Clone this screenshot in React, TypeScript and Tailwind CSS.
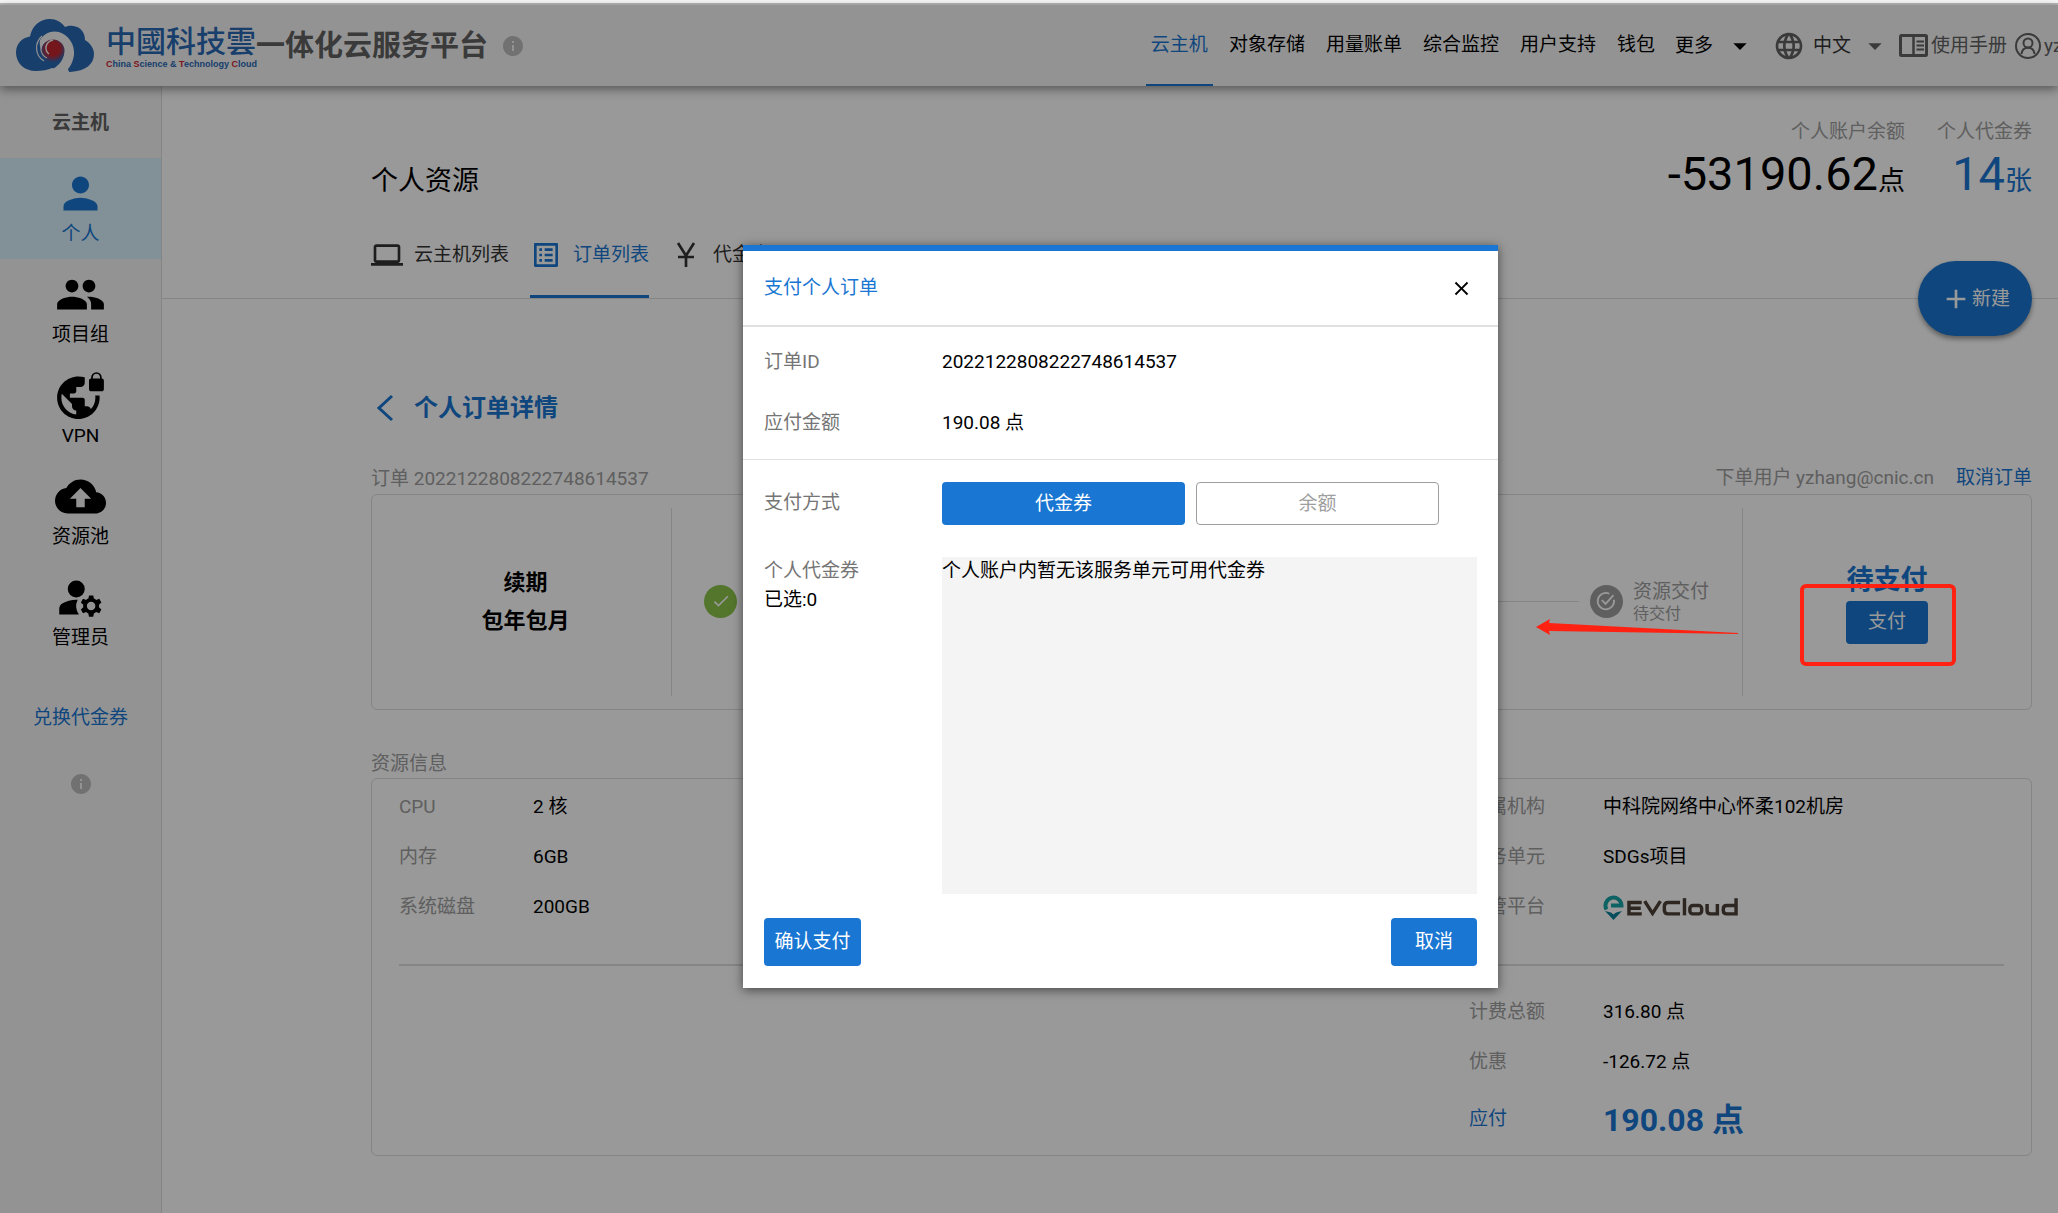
import React from "react";
import type { IconType } from "react-icons";
import {
  MdAdd,
  MdArrowDropDown,
  MdBackup,
  MdCheck,
  MdClose,
  MdComputer,
  MdGroup,
  MdInfo,
  MdLanguage,
  MdListAlt,
  MdManageAccounts,
  MdPerson,
  MdVpnLock,
} from "react-icons/md";

const navItems = ["云主机", "对象存储", "用量账单", "综合监控", "用户支持", "钱包"];

const sideItems: { label: string; icon: IconType; active?: boolean }[] = [
  { label: "个人", icon: MdPerson, active: true },
  { label: "项目组", icon: MdGroup },
  { label: "VPN", icon: MdVpnLock },
  { label: "资源池", icon: MdBackup },
  { label: "管理员", icon: MdManageAccounts },
];

function CloudLogo() {
  return (
    <svg viewBox="0 0 78 53" className="h-[53px] w-[78px]" aria-hidden="true">
      <defs>
        <radialGradient id="swirl" cx="0.5" cy="0.4" r="0.6">
          <stop offset="0.5" stopColor="#c4242f" />
          <stop offset="1" stopColor="#2868b4" />
        </radialGradient>
      </defs>
      <path
        d="M20 52C8 52 0 44 0 33.500C0 25 6 18.500 14 17.500C16 7 24 0 34 0C40 0 45.500 3 49 8C52 7 54 6.500 57 7C64 7.500 69 13 69 21C74 24 78 29 78 35C78 45 70 52 54 53L36 49C32 51 26 52 20 52Z"
        fill="#2868b4"
      />
      <path
        d="M24 21C28 14 36 11 43 13C53 16 59 26 58 36C57 43 54 48 52 50L53 53H30C42 49 50 40 47.500 30C45.500 24 40 20.500 34 21.500C29 22.500 26 26 26 31C24 28 23 25 24 21Z"
        fill="#f5f5f5"
      />
      <circle cx="37" cy="32" r="11.500" fill="url(#swirl)" />
      <path d="M26 17C18 24 19 37 28 42M30 19C22 26 24 36 31 39" fill="none" stroke="#f5f5f5" strokeWidth="1.200" />
      <path d="M37 21C29 23 28 31 33 35" fill="none" stroke="#f5f5f5" strokeWidth="1.500" />
    </svg>
  );
}

function ManualIcon() {
  return (
    <svg viewBox="0 0 29 23" className="h-[23px] w-[29px]" fill="none" stroke="currentColor" aria-hidden="true">
      <rect x="1.500" y="1.500" width="26" height="20" rx="1" strokeWidth="3" />
      <path d="M14.500 1V22" strokeWidth="2.500" />
      <path d="M17.500 7.500H25M17.500 11.500H25M17.500 15.500H25" strokeWidth="2" />
    </svg>
  );
}

function AccountIcon() {
  return (
    <svg viewBox="0 0 26 26" className="h-[26px] w-[26px]" fill="none" stroke="currentColor" strokeWidth="2" aria-hidden="true">
      <circle cx="13" cy="13" r="12" />
      <circle cx="13" cy="10" r="4.500" />
      <path d="M6.500 21C7 17 9.500 14.800 13 14.800S19 17 19.500 21" />
    </svg>
  );
}

function YenIcon() {
  return (
    <svg viewBox="0 0 24 24" className="size-8" fill="none" stroke="currentColor" strokeWidth="2" aria-hidden="true">
      <path d="M6 3L12 12.500L18 3M12 12V21M6 13.500H18" />
    </svg>
  );
}

function EvCloudLogo() {
  return (
    <span className="flex items-center">
      <svg viewBox="0 0 21 26" className="h-[26px] w-[21px]" fill="none" aria-hidden="true">
        <path d="M3.500 15.500A8 8 0 1 1 18.500 11.500H8" stroke="#17a3a6" strokeWidth="4" />
        <path d="M2 17L8 18.500L10.500 20.500L13 18.500L19 17L10.500 26Z" fill="#0b7f98" />
      </svg>
      <svg viewBox="0 0 114 18" className="ml-[3px] h-[18px] w-28" fill="none" stroke="#4c4038" strokeWidth="3.500" aria-hidden="true">
        <path d="M15 4.500H2V16H15M2 10.200H14" />
        <path d="M18 3L26 15.500L34 3" />
        <path d="M54 4.500H42Q38 4.500 38 8.500V12Q38 16 42 16H54" />
        <path d="M58.500 0V17.500" />
        <rect x="64" y="7.500" width="12" height="8.500" rx="3" />
        <path d="M81.500 6V12.500Q81.500 16 85 16H92V6" />
        <path d="M111 0V16H101.500Q98 16 98 12.500V11Q98 7.500 101.500 7.500H111" />
      </svg>
    </span>
  );
}

function Row({ label, children }: { label: string; children: React.ReactNode }) {
  return (
    <div className="flex h-[50px] items-center">
      <dt className="w-[134px] shrink-0 text-[#9e9e9e]">{label}</dt>
      <dd>{children}</dd>
    </div>
  );
}

function Header() {
  return (
    <header className="relative flex h-[81px] shrink-0 items-center bg-[#f5f5f5] pl-4 shadow-[0_3px_10px_rgba(0,0,0,0.45)]">
      <div className="flex shrink-0 items-center whitespace-nowrap">
        <CloudLogo />
        <div className="ml-3 w-[150px] pt-1 text-[#2868b4]">
          <div className="text-[30px] leading-8 font-medium">中國科技雲</div>
          <div className="font-['Liberation_Sans',sans-serif] text-[9px] leading-3 font-bold">
            <span className="text-[#d22630]">C</span>hina <span className="text-[#d22630]">S</span>cience &amp;{" "}
            <span className="text-[#d22630]">T</span>echnology <span className="text-[#d22630]">C</span>loud
          </div>
        </div>
        <h1 className="text-[29px] leading-10 font-bold text-[#616161]">一体化云服务平台</h1>
        <MdInfo className="ml-[13px] size-6 text-[#bdbdbd]" />
      </div>
      <nav className="ml-auto flex h-full shrink-0 items-center whitespace-nowrap">
        <div className="flex h-full gap-[11px]">
          {navItems.map((item, i) => (
            <a
              key={item}
              href="#"
              className={
                i === 0
                  ? "flex items-center border-b-2 border-[#1976d2] px-[5px] text-[#1976d2]"
                  : "flex items-center border-b-2 border-transparent px-[5px]"
              }
            >
              {item}
            </a>
          ))}
        </div>
        <button type="button" className="ml-[15px] flex items-center">
          更多
          <MdArrowDropDown className="ml-[11px] size-8" />
        </button>
        <button type="button" className="ml-[17px] flex items-center text-[#616161]">
          <MdLanguage className="size-8" />
          <span className="ml-2 text-[#333]">中文</span>
          <MdArrowDropDown className="ml-2 size-8" />
        </button>
        <a href="#" className="ml-2 flex items-center gap-[3px] text-[#616161]">
          <ManualIcon />
          使用手册
        </a>
        <a href="#" className="ml-2 flex w-[43px] items-center gap-[3px] overflow-hidden text-[#616161]">
          <span className="shrink-0">
            <AccountIcon />
          </span>
          yz
        </a>
      </nav>
    </header>
  );
}

function Sidebar() {
  return (
    <aside className="flex w-[162px] shrink-0 flex-col items-center border-r border-[#dedede] bg-[#f5f5f5]">
      <div className="flex h-[72px] items-center pt-px font-bold text-[#616161]">云主机</div>
      {sideItems.map(({ label, icon: Icon, active }) => (
        <a
          key={label}
          href="#"
          className={
            active
              ? "flex h-[101px] w-full flex-col items-center gap-px bg-[#d9f1fd] pt-[10px] text-[#1976d2]"
              : "flex h-[101px] w-full flex-col items-center gap-px pt-[10px]"
          }
        >
          <Icon className="size-[51px]" />
          {label}
        </a>
      ))}
      <a href="#" className="mt-[41px] text-[#1976d2]">
        兑换代金券
      </a>
      <MdInfo className="mt-10 size-6 text-[#bdbdbd]" />
    </aside>
  );
}

function Main() {
  return (
    <main className="relative min-w-0 flex-1 bg-white">
      <div className="flex h-[213px] flex-col border-b border-[#dedede] pr-[26px] pl-[209px]">
        <div className="flex h-[138px] justify-between">
          <h2 className="pt-[75px] text-[27px] leading-10">个人资源</h2>
          <div className="flex gap-8 pt-8 text-right">
            <div>
              <div className="text-[#9e9e9e]">个人账户余额</div>
              <div className="text-[47px] leading-[56px]">
                -53190.62<span className="text-[27px]">点</span>
              </div>
            </div>
            <div>
              <div className="text-[#9e9e9e]">个人代金券</div>
              <div className="text-[47px] leading-[56px] text-[#1976d2]">
                14<span className="text-[27px]">张</span>
              </div>
            </div>
          </div>
        </div>
        <nav className="flex h-[74px] gap-[21px]">
          <a href="#" className="flex items-center gap-[11px] border-b-3 border-transparent pb-[9px] text-[#333]">
            <MdComputer className="size-8" />
            云主机列表
          </a>
          <a href="#" className="flex items-center gap-[11px] border-b-3 border-[#1976d2] pb-[9px] text-[#1976d2]">
            <MdListAlt className="size-8" />
            订单列表
          </a>
          <a href="#" className="flex items-center gap-[11px] border-b-3 border-transparent pb-[9px] text-[#333]">
            <YenIcon />
            代金券
          </a>
        </nav>
      </div>

      <button
        type="button"
        className="absolute top-[175px] right-[26px] flex h-[75px] w-[114px] items-center justify-center rounded-full bg-[#1976d2] text-white shadow-[0_3px_5px_rgba(0,0,0,0.4)]"
      >
        <MdAdd className="size-8" />
        新建
      </button>

      <div className="pr-[26px] pl-[209px]">
        <div className="flex h-[165px] items-center pt-[53px]">
          <button type="button" aria-label="返回" className="flex w-[43px] items-center text-[#1976d2]">
            <svg viewBox="0 0 28 28" className="size-7" fill="none" stroke="currentColor" strokeWidth="3" aria-hidden="true">
              <path d="M21 2L8 14L21 26" />
            </svg>
          </button>
          <h3 className="text-[24px] leading-9 font-bold text-[#1976d2]">个人订单详情</h3>
        </div>

        <div className="flex h-[30px] items-center justify-between text-[#9e9e9e]">
          <span>订单 2022122808222748614537</span>
          <span className="flex gap-[22px] pb-0.5">
            <span>下单用户 yzhang@cnic.cn</span>
            <a href="#" className="text-[#1976d2]">
              取消订单
            </a>
          </span>
        </div>

        <section className="flex h-[216px] rounded-md border border-[#dedede] py-[13px]">
          <div className="flex w-[300px] shrink-0 items-center justify-center border-r border-[#dedede]">
            <p className="pl-2 text-center text-[22px] leading-[38px] font-bold">
              续期
              <br />
              包年包月
            </p>
          </div>
          <div className="flex flex-1 items-center border-r border-[#dedede] pr-[33px] pb-0.5 pl-8">
            <span className="flex size-[33px] items-center justify-center rounded-full bg-[#8bc34a] text-white">
              <MdCheck className="size-5" />
            </span>
            <span className="mx-[11px] h-px flex-1 bg-[#dedede]" />
            <span className="flex size-[33px] items-center justify-center rounded-full bg-[#9e9e9e] text-white">
              <svg viewBox="0 0 24 24" className="size-5" fill="none" stroke="currentColor" strokeWidth="2.200" aria-hidden="true">
                <path d="M21.500 10.500A9.800 9.800 0 1 1 16 3.300M7 11L11.500 15.500L21 5" />
              </svg>
            </span>
            <span className="ml-[10px] pt-0.5 text-[#9e9e9e]">
              <span className="block leading-6">资源交付</span>
              <span className="block text-[16px] leading-5">待交付</span>
            </span>
          </div>
          <div className="flex w-72 shrink-0 flex-col items-center justify-center">
            <strong className="text-[27px] leading-10 text-[#1976d2]">待支付</strong>
            <button type="button" className="mt-px mb-px h-[43px] w-[82px] rounded-sm bg-[#1976d2] text-white">
              支付
            </button>
          </div>
        </section>

        <h4 className="mt-10 text-[#9e9e9e]">资源信息</h4>
        <section className="h-[378px] rounded-md border border-[#dedede] px-[27px] pt-[3px]">
          <div className="grid h-[184px] grid-cols-3 border-b-2 border-[#dedede]">
            <dl>
              <Row label="CPU">2 核</Row>
              <Row label="内存">6GB</Row>
              <Row label="系统磁盘">200GB</Row>
            </dl>
            <dl className="col-start-3">
              <Row label="所属机构">中科院网络中心怀柔102机房</Row>
              <Row label="服务单元">SDGs项目</Row>
              <Row label="托管平台">
                <EvCloudLogo />
              </Row>
            </dl>
          </div>
          <div className="grid grid-cols-3 pt-[21px]">
            <dl className="col-start-3">
              <Row label="计费总额">316.80 点</Row>
              <Row label="优惠">-126.72 点</Row>
              <div className="flex h-16 items-center text-[#1976d2]">
                <dt className="w-[134px]">应付</dt>
                <dd className="pt-0.5 text-[32px] leading-10 font-bold">190.08 点</dd>
              </div>
            </dl>
          </div>
        </section>
      </div>
    </main>
  );
}

function PayDialog() {
  return (
    <div
      role="dialog"
      aria-labelledby="pay-title"
      className="w-[755px] border-t-6 border-[#1976d2] bg-white shadow-[0_2px_10px_rgba(0,0,0,0.55)]"
    >
      <div className="flex h-[76px] items-center justify-between border-b-2 border-[#e0e0e0] pr-[25px] pl-[21px]">
        <h2 id="pay-title" className="pb-px text-[#1976d2]">
          支付个人订单
        </h2>
        <button type="button" aria-label="关闭">
          <MdClose className="size-[23px]" />
        </button>
      </div>
      <dl className="border-b border-[#e0e0e0] px-[21px] pt-1 pb-[6px]">
        <div className="flex h-[61px] items-center">
          <dt className="w-[178px] text-[#757575]">订单ID</dt>
          <dd>2022122808222748614537</dd>
        </div>
        <div className="flex h-[61px] items-center">
          <dt className="w-[178px] text-[#757575]">应付金额</dt>
          <dd>190.08 点</dd>
        </div>
      </dl>
      <div className="flex px-[21px] pt-[22px]">
        <span className="w-[178px] pt-[7px] text-[#757575]">支付方式</span>
        <div className="flex gap-[11px]">
          <button type="button" className="h-[43px] w-[243px] rounded-sm bg-[#1976d2] text-white">
            代金券
          </button>
          <button type="button" className="h-[43px] w-[243px] rounded-sm border border-[#9e9e9e] text-[#9e9e9e]">
            余额
          </button>
        </div>
      </div>
      <div className="flex px-[21px] pt-8">
        <div className="flex w-[178px] flex-col gap-px">
          <div className="text-[#757575]">个人代金券</div>
          <div>已选:0</div>
        </div>
        <div className="h-[337px] flex-1 bg-[#f4f4f4]">个人账户内暂无该服务单元可用代金券</div>
      </div>
      <div className="flex justify-between px-[21px] pt-6 pb-[22px]">
        <button type="button" className="h-12 w-[97px] rounded-sm bg-[#1976d2] text-white">
          确认支付
        </button>
        <button type="button" className="h-12 w-[86px] rounded-sm bg-[#1976d2] text-white">
          取消
        </button>
      </div>
    </div>
  );
}

export default function App() {
  return (
    <div className="flex min-h-screen flex-col overflow-hidden bg-white font-['Roboto','Noto_Sans_CJK_SC',sans-serif] text-[19px] leading-7 text-black">
      <div className="h-[5px] shrink-0 border-b-2 border-[#b8b8b8] bg-[#f8f8f8]" />
      <div className="relative flex flex-1 flex-col">
        <div className="relative z-10">
          <Header />
        </div>
        <div className="flex flex-1">
          <Sidebar />
          <Main />
        </div>
        <div className="absolute inset-0 z-20 flex items-start justify-center bg-black/40 pt-60 pl-[183px]">
          <PayDialog />
        </div>
        <div className="pointer-events-none absolute top-[579px] right-[102px] z-30 h-[82px] w-[156px] rounded-md border-4 border-[#ff2212]" />
        <svg
          viewBox="0 0 202 16"
          className="pointer-events-none absolute top-[614px] right-[320px] z-30 h-4 w-[202px]"
          fill="#ff2212"
          aria-hidden="true"
        >
          <path d="M0 8L14 0L13 4L202 14V15L13 12L14 16Z" />
        </svg>
      </div>
    </div>
  );
}
